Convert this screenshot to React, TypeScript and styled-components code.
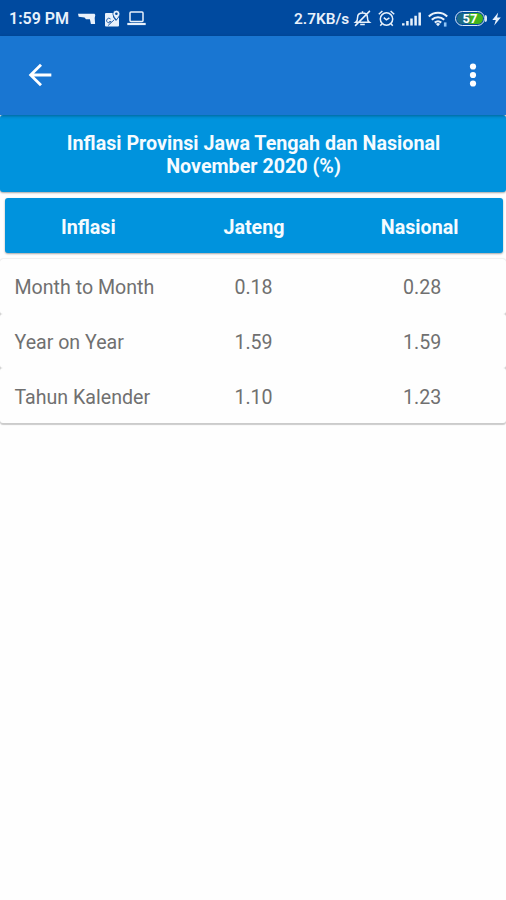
import React from "react";
import styled, { createGlobalStyle } from "styled-components";

const GlobalStyle = createGlobalStyle`
  * { box-sizing: border-box; }
  body { margin: 0; background: #fefefe; font-family: Roboto, sans-serif; }
`;

const Screen = styled.main`
  display: flex;
  flex-direction: column;
  width: 506px;
  min-height: 900px;
  overflow: hidden;
  background: #fefefe;
`;

const StatusBar = styled.header`
  display: flex;
  align-items: center;
  height: 36px;
  padding: 1px 5px 0 9px;
  background: #004a9f;
  color: #e8f1fb;
`;

const StatusText = styled.span<{ $width: number; $size: number }>`
  width: ${(p) => p.$width}px;
  font-size: ${(p) => p.$size}px;
  font-weight: 600;
  line-height: 20px;
  white-space: nowrap;
`;

const Icon = styled.svg<{ $gap?: number }>`
  display: block;
  flex: none;
  margin-left: ${(p) => p.$gap ?? 0}px;
  overflow: visible;
`;

const Spacer = styled.div`
  flex: 1;
`;

const AppBar = styled.nav`
  position: relative;
  display: flex;
  align-items: center;
  justify-content: space-between;
  height: 79px;
  padding: 0 16px 2px 23px;
  background: #1976d2;
  box-shadow: 0 1px 3px rgba(0, 40, 60, 0.45);
`;

const BarButton = styled.button`
  display: flex;
  padding: 0;
  border: 0;
  background: none;
  color: #fff;
`;

const TitleCard = styled.h1`
  display: flex;
  align-items: center;
  justify-content: center;
  height: 77px;
  margin: 0;
  padding: 2px 0 0 1px;
  border-radius: 3px;
  background: #0093dd;
  box-shadow: 0 1px 2px rgba(0, 0, 0, 0.35);
  color: #f5fbff;
  font-size: 19.7px;
  font-weight: 700;
  line-height: 23px;
  text-align: center;
`;

const TableHead = styled.div`
  display: grid;
  grid-template-columns: repeat(3, 1fr);
  align-items: center;
  height: 55px;
  margin: 6px 3.5px 0 4.5px;
  padding: 3px 0 0 1px;
  border-radius: 3px;
  background: #0093dd;
  box-shadow: 0 1px 2px rgba(0, 0, 0, 0.35);
  color: #f5fbff;
  font-size: 19.7px;
  font-weight: 700;
  line-height: 23px;
  text-align: center;
`;

const TableBody = styled.section`
  margin-top: 6px;
  border-radius: 3px;
  background: #d2d2d2;
  box-shadow: 0 2px 1px rgba(0, 0, 0, 0.2), 0 -1px 1px rgba(0, 0, 0, 0.06);
`;

const Row = styled.div`
  display: grid;
  grid-template-columns: repeat(3, 1fr);
  align-items: center;
  height: 54.7px;
  padding-top: 3px;
  border-radius: 3px;
  background: #fefefe;
  color: #707070;
  font-size: 19.6px;
  line-height: 23px;
`;

const Label = styled.span`
  padding-left: 14.5px;
  white-space: nowrap;
`;

const Value = styled.span`
  padding-left: 1px;
  text-align: center;
`;

const ROWS = [
  ["Month to Month", "0.18", "0.28"],
  ["Year on Year", "1.59", "1.59"],
  ["Tahun Kalender", "1.10", "1.23"],
];

const PistolIcon = () => (
  <Icon width="18" height="12" viewBox="0 0 18 12" fill="currentColor">
    <path d="M0 .8h16.5l.8 1.2-.6 3 .4 6h-4.2l-1-4.8H8L6.5 4.4.7 3.8z" />
  </Icon>
);

const MapIcon = () => (
  <Icon $gap={8} width="17" height="17" viewBox="0 0 17 17">
    <path d="M2 3h7v4l3 4 3-4v8.5a1 1 0 0 1-1 1H2a1 1 0 0 1-1-1V4a1 1 0 0 1 1-1z" fill="currentColor" />
    <path d="M6.6 9a2.3 2.3 0 1 0 .4 2.5H5.2M4 15.6 10.2 9.8" fill="none" stroke="#2e66ac" strokeWidth="1" />
    <path d="M12.4.2a3.5 3.5 0 0 1 3.5 3.5c0 2.4-3.5 6-3.5 6s-3.5-3.6-3.5-6A3.5 3.5 0 0 1 12.4.2z" fill="currentColor" stroke="#004a9f" strokeWidth=".8" />
    <circle cx="12.4" cy="3.7" r="1.3" fill="#004a9f" />
  </Icon>
);

const LaptopIcon = () => (
  <Icon $gap={6} width="19" height="15" viewBox="0 0 19 15" fill="none" stroke="currentColor">
    <rect x="3" y="1" width="13" height="9.5" rx="1" strokeWidth="1.5" />
    <path d="M.3 13h18.4" strokeWidth="2.2" />
  </Icon>
);

const MutedBellIcon = () => (
  <Icon width="17" height="17" viewBox="0 0 17 17" fill="none" stroke="currentColor" strokeWidth="1.5">
    <path d="M1.8 12.2c1.7-1.2 1.8-2.6 1.8-5C3.6 4.5 5.5 2.9 8.5 2.9s4.9 1.6 4.9 4.3c0 2.4.1 3.8 1.8 5zM8.5 3V1.2M6.2 14.6h4.6M15.9.9 1.1 15.9" />
  </Icon>
);

const AlarmIcon = () => (
  <Icon $gap={7} width="17" height="17" viewBox="0 0 17 17" fill="none" stroke="currentColor" strokeWidth="1.5">
    <circle cx="8.5" cy="9" r="6.2" />
    <path d="M.8 4.3 4.4 1M16.2 4.3 12.6 1M5.8 7.6l2.6 2.3 3-2M3.9 13.7l-1.6 2M13.1 13.7l1.6 2" />
  </Icon>
);

const SignalIcon = () => (
  <Icon $gap={7} width="20" height="14" viewBox="0 0 20 14" stroke="currentColor" strokeWidth="2.5">
    <path d="M1.3 13.6v-2.3M5.4 13.6V9M9.5 13.6V6.5M13.6 13.6V3.8M17.7 13.6V.4" />
  </Icon>
);

const WifiIcon = () => (
  <Icon $gap={6} width="20" height="16" viewBox="0 0 20 16" fill="none" stroke="currentColor" strokeWidth="2.1">
    <path d="M.8 5.5c5.2-5 13.2-5 18.4 0M3.8 8.7c3.5-3.3 8.9-3.3 12.4 0M6.8 11.6c1.9-1.6 4.5-1.6 6.4 0" />
    <path d="M10 15.3 7.9 12.9q2.1-1.6 4.2 0z" fill="currentColor" stroke="none" />
    <path d="M17.2 11.4v4.2" stroke="#8fc4f6" strokeWidth="2.6" />
  </Icon>
);

const BatteryShell = styled.div`
  display: flex;
  align-items: center;
  justify-content: center;
  width: 30px;
  height: 15px;
  margin-left: 7px;
  padding: 1px;
  border: 1.5px solid #dce9f8;
  border-radius: 8px;
  background: linear-gradient(90deg, #1d6a86 0 40%, #43b51c 55%) content-box;
  color: #fff;
  font-size: 13px;
  font-weight: 700;
  line-height: 12px;
`;

const BatteryNub = styled.div`
  width: 2px;
  height: 7px;
  border-radius: 0 2px 2px 0;
  background: #dce9f8;
`;

const BoltIcon = () => (
  <Icon $gap={5} width="9" height="14" viewBox="0 0 9 14" fill="currentColor">
    <path d="M6.2.5.3 8h3.5l-1.6 5.5L8.8 5.6H5.1z" />
  </Icon>
);

export default function App() {
  return (
    <Screen>
      <GlobalStyle />
      <StatusBar>
        <StatusText $width={69} $size={16}>1:59 PM</StatusText>
        <PistolIcon />
        <MapIcon />
        <LaptopIcon />
        <Spacer />
        <StatusText $width={60} $size={15.4}>2.7KB/s</StatusText>
        <MutedBellIcon />
        <AlarmIcon />
        <SignalIcon />
        <WifiIcon />
        <BatteryShell>57</BatteryShell>
        <BatteryNub />
        <BoltIcon />
      </StatusBar>
      <AppBar>
        <BarButton aria-label="Back">
          <Icon width="34" height="34" viewBox="0 0 24 24" fill="currentColor">
            <path d="M20 11H7.83l5.59-5.59L12 4l-8 8 8 8 1.41-1.41L7.83 13H20v-2z" />
          </Icon>
        </BarButton>
        <BarButton aria-label="More options">
          <Icon width="34" height="34" viewBox="0 0 34 34" fill="currentColor">
            <circle cx="17" cy="8.5" r="3.1" />
            <circle cx="17" cy="17" r="3.1" />
            <circle cx="17" cy="25.5" r="3.1" />
          </Icon>
        </BarButton>
      </AppBar>
      <TitleCard>
        <span>
          Inflasi Provinsi Jawa Tengah dan Nasional
          <br />
          November 2020 (%)
        </span>
      </TitleCard>
      <TableHead>
        <span>Inflasi</span>
        <span>Jateng</span>
        <span>Nasional</span>
      </TableHead>
      <TableBody>
        {ROWS.map(([label, jateng, nasional]) => (
          <Row key={label}>
            <Label>{label}</Label>
            <Value>{jateng}</Value>
            <Value>{nasional}</Value>
          </Row>
        ))}
      </TableBody>
    </Screen>
  );
}
